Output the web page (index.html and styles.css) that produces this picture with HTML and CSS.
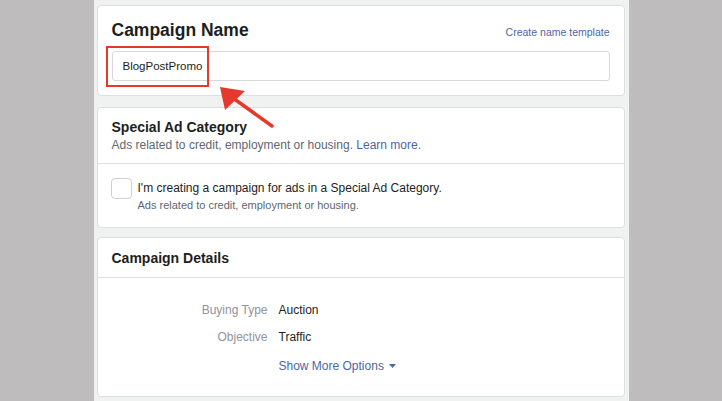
FILE: index.html
```html
<!DOCTYPE html>
<html lang="en">
<head>
    <meta charset="UTF-8">
    <meta name="viewport" content="width=device-width, initial-scale=1.0">
    <title>Create Campaign</title>
    <link rel="stylesheet" href="styles.css">
</head>
<body>
    <div class="page">

        <!-- Campaign name -->
        <section class="card name-card">
            <div class="name-head">
                <h1>Campaign Name</h1>
                <a href="#" class="link small">Create name template</a>
            </div>
            <input type="text" class="name-input" value="BlogPostPromo">
        </section>

        <!-- Special ad category -->
        <section class="card special-card">
            <div class="card-head special-head">
                <h2>Special Ad Category</h2>
                <p class="sub">Ads related to credit, employment or housing. <a href="#" class="link">Learn more.</a></p>
            </div>
            <label class="check-row">
                <span class="checkbox"></span>
                <span class="check-text">
                    <span class="check-title">I'm creating a campaign for ads in a Special Ad Category.</span>
                    <span class="check-sub">Ads related to credit, employment or housing.</span>
                </span>
            </label>
        </section>

        <!-- Campaign details -->
        <section class="card">
            <div class="card-head">
                <h2>Campaign Details</h2>
            </div>
            <div class="details">
                <span class="key">Buying Type</span>
                <span class="val">Auction</span>
                <span class="key">Objective</span>
                <span class="val">Traffic</span>
                <span></span>
                <a href="#" class="link more">Show More Options
                    <svg width="7" height="4" viewBox="0 0 7 4"><path d="M0 0h7L3.5 4z" fill="#4b67a8"/></svg>
                </a>
            </div>
        </section>

        <!-- callout over the name field -->
        <div class="highlight"></div>
        <svg class="pointer" width="64" height="48" viewBox="0 0 64 48">
            <line x1="20" y1="16" x2="59" y2="44" stroke="#e5392e" stroke-width="3.5" stroke-linecap="round"/>
            <polygon points="7,5 32,9 12,28" fill="#e5392e"/>
        </svg>
    </div>
</body>
</html>
```

FILE: styles.css
```css
* {
    box-sizing: border-box;
}

body {
    margin: 0;
    background: #bfbcbd;
    font-family: "Liberation Sans", Arial, sans-serif;
    color: #1c1e21;
}

.page {
    position: relative;
    width: 535px;
    min-height: 100vh;
    margin: 0 auto;
    padding: 5px 4px 4px 3px;
    background: #f0f1f1;
}

.card {
    background: #fff;
    border: 1px solid #dddfe2;
    border-radius: 4px;
    margin-bottom: 10px;
}

.link {
    color: #4b67a8;
    text-decoration: none;
}

/* Campaign name */
.name-card {
    padding: 12px 14px 14px;
    margin-bottom: 11px;
}

.name-head {
    display: flex;
    justify-content: space-between;
    align-items: baseline;
}

h1 {
    margin: 0;
    font-size: 17.5px;
    line-height: 24px;
    font-weight: 700;
}

.small {
    font-size: 10.5px;
}

.name-input {
    display: block;
    width: 100%;
    height: 30px;
    margin-top: 9px;
    padding: 0 10px;
    border: 1px solid #d6d8dc;
    border-radius: 3px;
    font-family: inherit;
    font-size: 11.5px;
    color: #1c1e21;
}

/* Section headers */
.card-head {
    padding: 10px 14px 9px;
    border-bottom: 1px solid #dddfe2;
}

.special-card {
    margin-bottom: 9px;
}

.special-head {
    padding: 9px 14px 10px;
}

h2 {
    margin: 0;
    font-size: 14px;
    line-height: 20px;
    font-weight: 700;
}

.sub {
    margin: 0;
    font-size: 12px;
    line-height: 16px;
    color: #606770;
}

/* Checkbox row */
.check-row {
    display: flex;
    gap: 6px;
    padding: 14px 13px 13px;
}

.checkbox {
    flex: none;
    width: 21px;
    height: 21px;
    border: 1px solid #ccd0d5;
    border-radius: 4px;
}

.check-text {
    display: flex;
    flex-direction: column;
    padding-top: 1px;
}

.check-title {
    font-size: 12px;
    line-height: 18px;
}

.check-sub {
    font-size: 11px;
    line-height: 17px;
    color: #606770;
}

/* Details grid */
.details {
    display: grid;
    grid-template-columns: 156px 1fr;
    column-gap: 11px;
    row-gap: 11px;
    padding: 24px 14px 22px;
    font-size: 12px;
    line-height: 16px;
}

.key {
    text-align: right;
    color: #90949c;
}

.more {
    display: flex;
    align-items: center;
    gap: 5px;
    margin-top: 2px;
}

/* Callout */
.highlight {
    position: absolute;
    left: 12px;
    top: 46px;
    width: 103px;
    height: 41px;
    border: 2px solid #e5392e;
}

.pointer {
    position: absolute;
    left: 119px;
    top: 82px;
}
```
